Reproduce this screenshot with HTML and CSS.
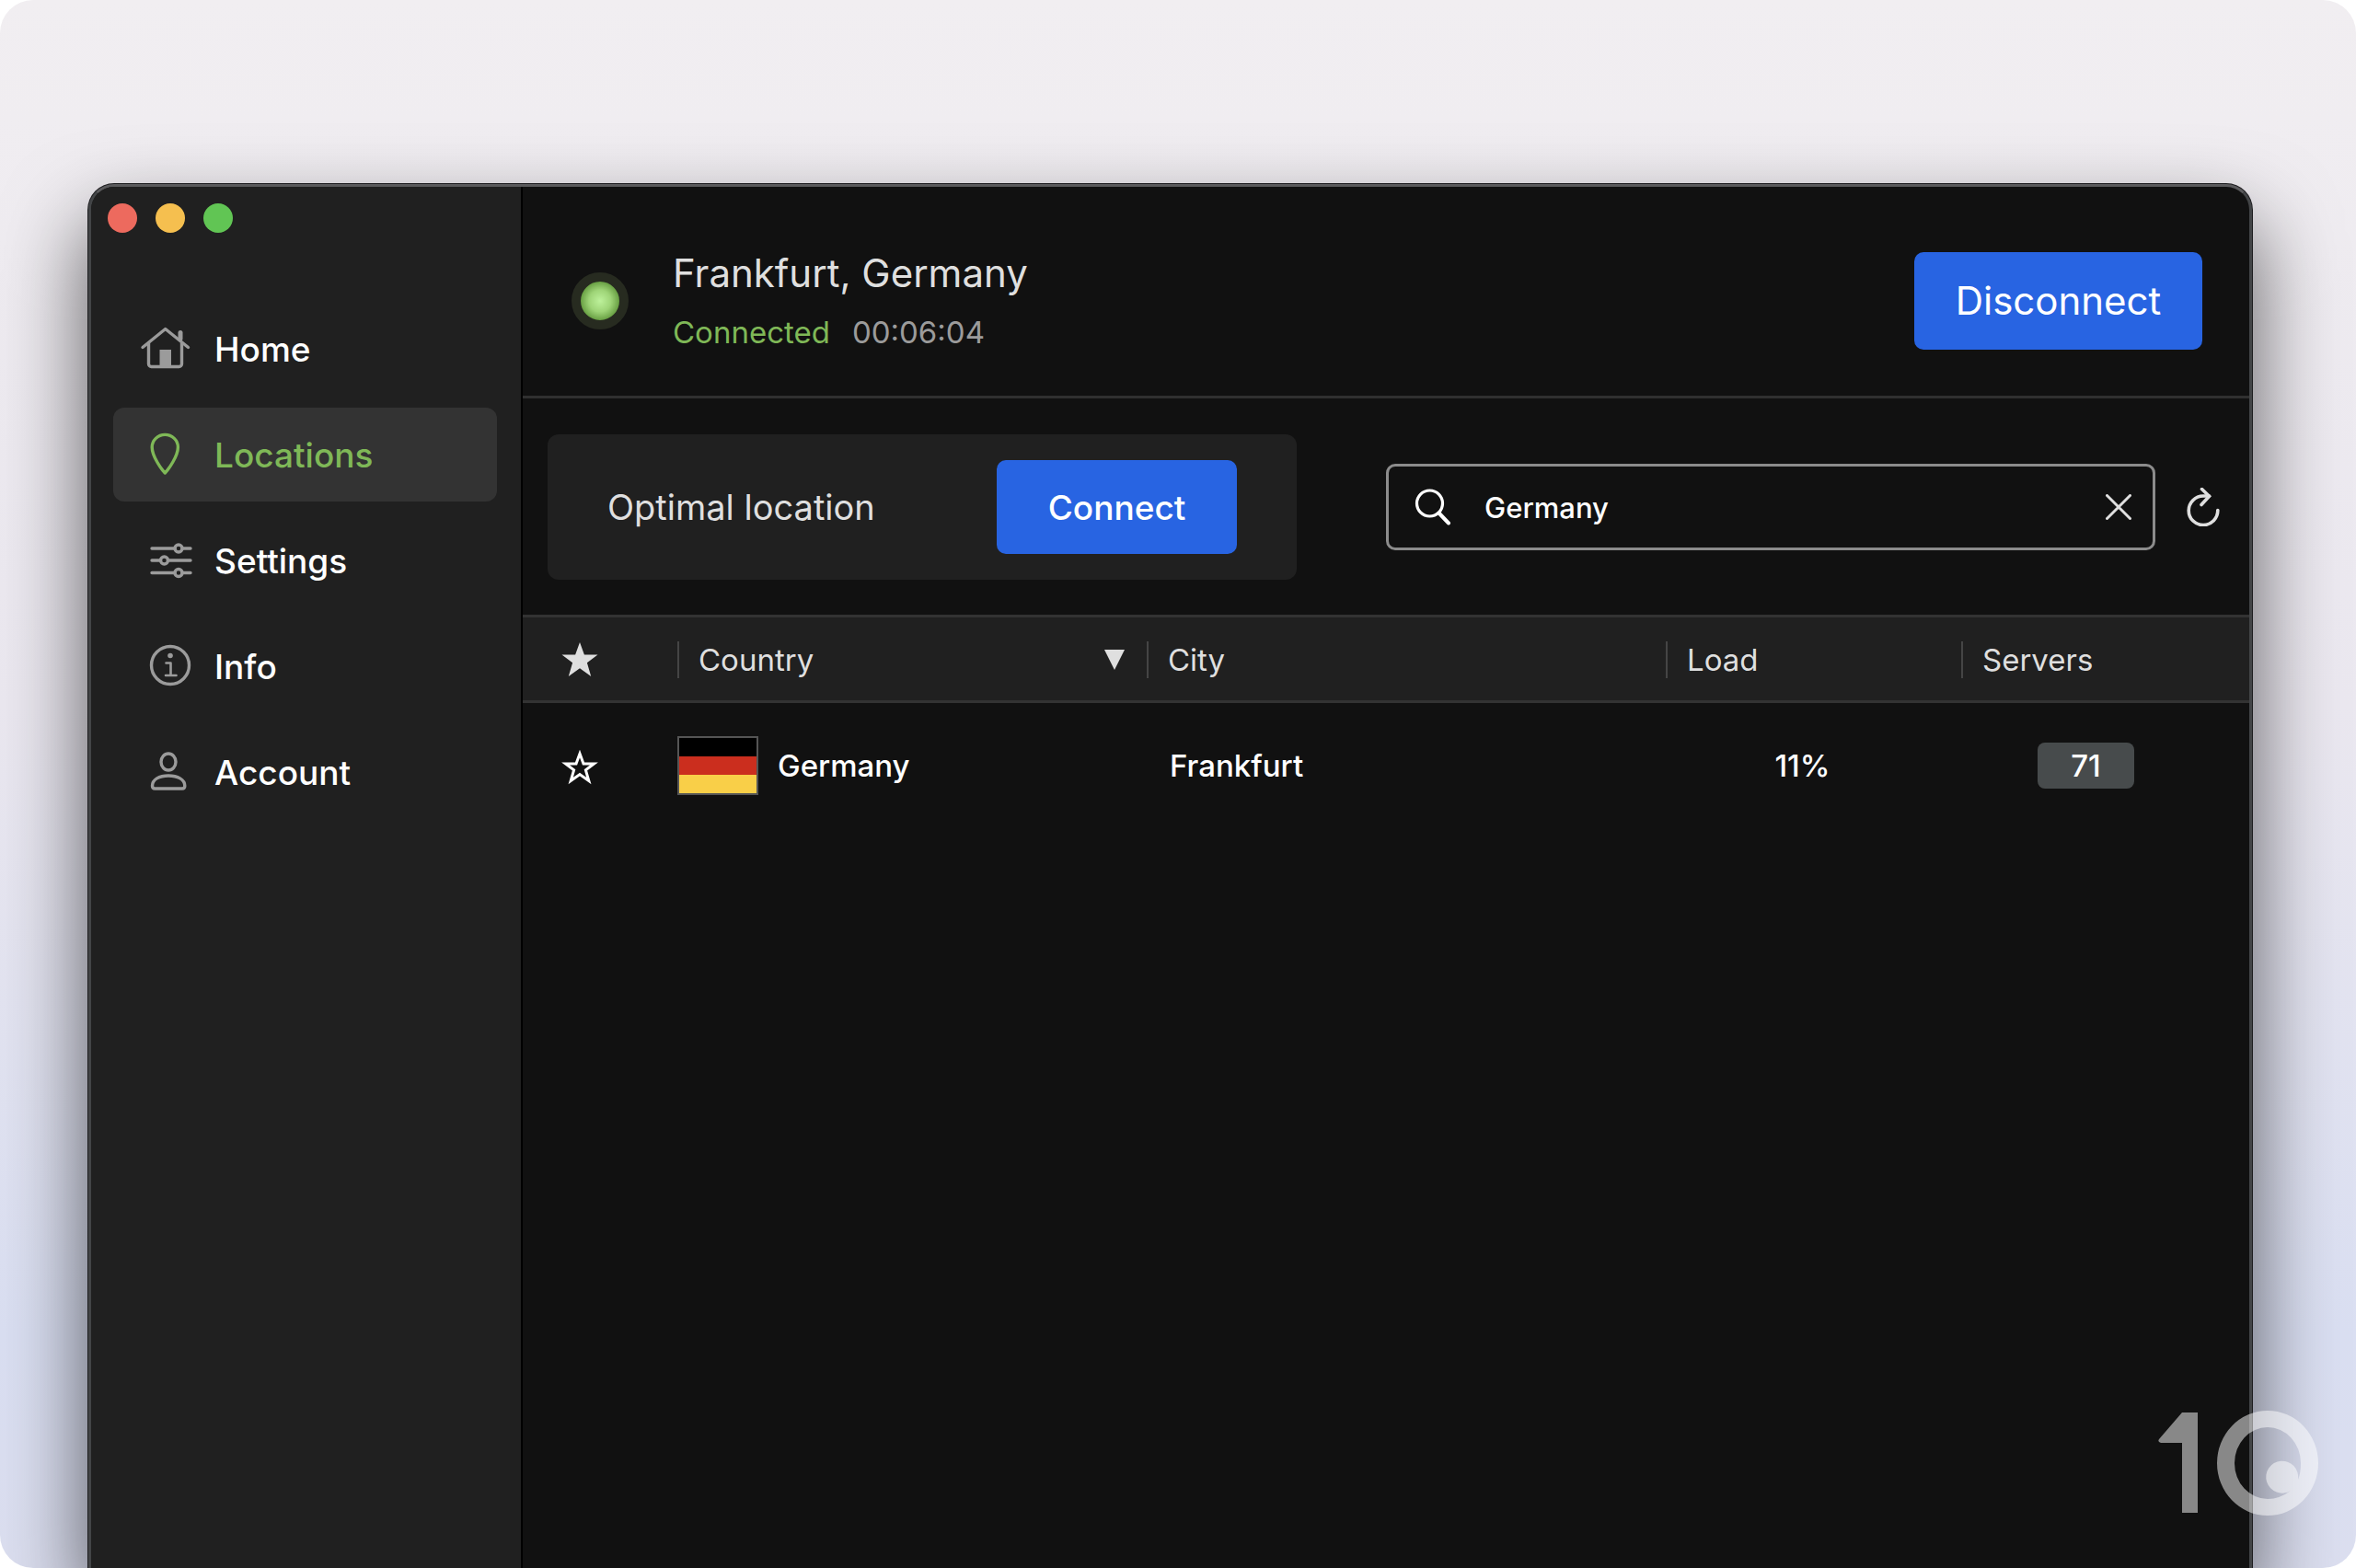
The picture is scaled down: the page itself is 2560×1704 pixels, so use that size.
FILE: index.html
```html
<!DOCTYPE html>
<html lang="en">
<head>
<meta charset="utf-8">
<title>VPN Locations</title>
<link rel="stylesheet" href="styles.css">
</head>
<body>
<div class="desktop">
  <div class="window">
    <aside class="sidebar">
      <div class="lights">
        <button class="light red" type="button" aria-label="Close"></button>
        <button class="light yellow" type="button" aria-label="Minimize"></button>
        <button class="light green" type="button" aria-label="Zoom"></button>
      </div>
      <nav class="nav">
        <a class="nav-item" href="#home">
          <svg class="nav-icon" viewBox="0 0 60 60" aria-hidden="true">
            <path d="M5 28.500 L29.700 8.500 L54.500 28.500"/><path d="M11.500 24V46.500a3 3 0 0 0 3 3H44.500a3 3 0 0 0 3-3V24"/><path class="solid" d="M23.500 31H36V50H23.500z"/><path d="M46 19V12.500" stroke-width="5"/>
          </svg>
          Home
        </a>
        <a class="nav-item active" href="#locations" aria-current="page">
          <svg class="nav-icon" viewBox="0 0 60 60" aria-hidden="true">
            <path d="M29.300 50C25.500 46 15.200 32 15.200 22A14.100 13.600 0 0 1 43.400 22C43.400 32 33 46 29.300 50z"/>
          </svg>
          Locations
        </a>
        <a class="nav-item" href="#settings">
          <svg class="nav-icon" viewBox="0 0 60 60" aria-hidden="true">
            <path d="M15 17H40M48 17H57M15 30H24.500M32.500 30H57M15 43.500H40M48 43.500H57"/>
            <circle cx="44" cy="17" r="4"/><circle cx="28.500" cy="30" r="4"/><circle cx="44" cy="43.500" r="4"/>
          </svg>
          Settings
        </a>
        <a class="nav-item" href="#info">
          <svg class="nav-icon" viewBox="0 0 60 60" aria-hidden="true">
            <circle cx="35" cy="29" r="20.500"/><circle class="solid" cx="35" cy="18.500" r="2.800"/><path d="M30.500 26.500H35.500V40M30 40H41.500" stroke-width="2.600"/>
          </svg>
          Info
        </a>
        <a class="nav-item" href="#account">
          <svg class="nav-icon" viewBox="0 0 60 60" aria-hidden="true">
            <ellipse cx="33" cy="19" rx="8" ry="9"/><path d="M15.500 45C15.500 38 23 34 33 34S50.800 38 50.800 45Q50.800 48 48 48H18.300Q15.500 48 15.500 45z"/>
          </svg>
          Account
        </a>
      </nav>
    </aside>
    <main class="main">
      <header class="status">
        <span class="status-dot"></span>
        <div class="status-text">
          <h1 class="status-title">Frankfurt, Germany</h1>
          <p class="status-line"><span class="connected">Connected</span><span class="timer">00:06:04</span></p>
        </div>
        <button class="button button-large" type="button">Disconnect</button>
      </header>
      <section class="toolbar">
        <div class="optimal">
          <span class="optimal-label">Optimal location</span>
          <button class="button" type="button">Connect</button>
        </div>
        <div class="search-group">
          <label class="search">
            <svg class="search-icon" viewBox="0 0 40 40" aria-hidden="true"><circle cx="16.500" cy="16" r="14"/><path d="M26.500 26.500L37 37.500" stroke-width="4"/></svg>
            <input class="search-input" type="text" value="Germany" aria-label="Search locations">
            <button class="icon-button" type="button" aria-label="Clear search">
              <svg class="clear-icon" viewBox="0 0 28 28" aria-hidden="true"><path d="M1.500 1.500L26.500 26.500M26.500 1.500L1.500 26.500"/></svg>
            </button>
          </label>
          <button class="icon-button" type="button" aria-label="Refresh">
            <svg class="refresh-icon" viewBox="0 0 36 42" aria-hidden="true"><path d="M24.500 9H18A15.800 15.800 0 1 0 33.800 24.500"/><path class="refresh-head" d="M16.500 1.500L24.500 9.300L16 18.500"/></svg>
          </button>
        </div>
      </section>
      <table class="locations">
        <colgroup><col class="col-star"><col class="col-country"><col><col class="col-load"><col class="col-servers"></colgroup>
        <thead>
          <tr>
            <th class="star-cell" aria-label="Favorite"><svg class="star star-full" viewBox="0 0 40 38" aria-hidden="true"><path d="M20 0L24.900 13.400H39.500L27.900 22.300L32.200 37L20 28.300L7.800 37L12.100 22.300L.5 13.400H15.100z"/></svg></th>
            <th><div class="head">Country<svg class="sort" viewBox="0 0 22 22" aria-hidden="true"><path d="M0 0H22L11 22z"/></svg></div></th>
            <th><div class="head">City</div></th>
            <th><div class="head">Load</div></th>
            <th><div class="head">Servers</div></th>
          </tr>
        </thead>
        <tbody>
          <tr>
            <td class="star-cell"><button class="icon-button" type="button" aria-label="Add to favorites"><svg class="star star-line" viewBox="0 0 40 38" aria-hidden="true"><path d="M20 4L24 14.900H35.500L26.400 21.900L29.800 33.500L20 26.500L10.200 33.500L13.600 21.900L4.500 14.900H16z"/></svg></button></td>
            <td><div class="country"><span class="flag"></span>Germany</div></td>
            <td class="city">Frankfurt</td>
            <td class="load">11%</td>
            <td class="servers"><span class="badge">71</span></td>
          </tr>
        </tbody>
      </table>
    </main>
  </div>
  <svg class="watermark" viewBox="0 0 176 116" role="img" aria-label="10">
    <path d="M26 2H43V111H26V35H3Q-1 34 1 31z"/>
    <path fill-rule="evenodd" d="M119 0A55 57 0 1 1 119 114A55 57 0 1 1 119 0zM119 18A36 39 0 1 0 119 96Q132 96 144 87A17.500 17.500 0 1 1 152 75Q155 68 155 57A36 39 0 0 0 119 18z"/>
  </svg>
</div>
</body>
</html>
```
FILE: styles.css
```css
* {
  box-sizing: border-box;
}

body {
  margin: 0;
  background: #ffffff;
  color: #ffffff;
  font-family: Inter, "Liberation Sans", sans-serif;
}

button {
  border: 0;
  padding: 0;
  background: none;
  color: inherit;
  font: inherit;
  cursor: pointer;
}

.desktop {
  position: relative;
  display: flex;
  min-height: 100vh;
  padding: 200px 113px 0 96px;
  overflow: hidden;
  border-radius: 36px;
  background: linear-gradient(#f1eef1, #ebe8f0 45%, #dadff2 85%, #dcdff0);
}

.window {
  display: flex;
  flex: 1;
  overflow: hidden;
  border: 3px solid #434547;
  border-top-color: #5a5a5c;
  border-bottom: 0;
  border-radius: 28px 28px 0 0;
  background: #111111;
  box-shadow: 0 0 0 1px #1e1e20, 0 44px 88px 4px rgba(0, 0, 0, 0.58);
}

.sidebar {
  flex: none;
  width: 469px;
  padding: 18px 26px 0 24px;
  border-right: 2px solid #000000;
  background: #202020;
}

.lights {
  display: flex;
  gap: 20px;
  margin-left: -6px;
}

.light {
  width: 32px;
  height: 32px;
  border-radius: 50%;
}

.red { background: #ed6a5e; }
.yellow { background: #f5bf4f; }
.green { background: #61c554; }

.nav {
  display: flex;
  flex-direction: column;
  gap: 13px;
  margin-top: 75px;
}

.nav-item {
  display: flex;
  align-items: center;
  gap: 23px;
  height: 102px;
  padding-left: 27px;
  border-radius: 12px;
  color: #ffffff;
  font-size: 37px;
  font-weight: 500;
  text-decoration: none;
}

.nav-item.active {
  background: #333333;
  color: #7fb857;
}

.nav-icon {
  width: 60px;
  height: 60px;
  fill: none;
  stroke: #9b9b9b;
  stroke-width: 3.4;
  stroke-linejoin: round;
  stroke-linecap: round;
}

.nav-icon .solid {
  fill: #9b9b9b;
  stroke: none;
}

.active .nav-icon {
  stroke: #7fb857;
}

.main {
  flex: 1;
  min-width: 0;
}

.status {
  display: flex;
  align-items: center;
  height: 230px;
  padding: 20px 51px 0 53px;
  border-bottom: 3px solid #303030;
}

.status-dot {
  width: 62px;
  height: 62px;
  margin-right: 48px;
  border: 10px solid #272b20;
  border-radius: 50%;
  background: radial-gradient(circle, #bdf19b 0, #9ed477 40%, #69a044 70%);
}

.status-text {
  flex: 1;
}

.status-title {
  margin: 0;
  color: #dfdfdf;
  font-size: 42px;
  font-weight: 400;
  line-height: 60px;
}

.status-line {
  display: flex;
  gap: 24px;
  margin: 8px 0 0;
  color: #9b9b9b;
  font-size: 33px;
  line-height: 52px;
}

.connected {
  color: #7fb857;
}

.button {
  width: 261px;
  height: 102px;
  border-radius: 10px;
  background: #2864e2;
  color: #ffffff;
  font-size: 37px;
  font-weight: 500;
}

.button-large {
  width: 313px;
  height: 106px;
  font-size: 42px;
  font-weight: 400;
}

.toolbar {
  display: flex;
  align-items: center;
  justify-content: space-between;
  padding: 39px 32px 38px 27px;
}

.optimal {
  display: flex;
  align-items: center;
  justify-content: space-between;
  width: 814px;
  height: 158px;
  padding: 0 65px;
  border-radius: 12px;
  background: #202020;
}

.optimal-label {
  color: #dfdfdf;
  font-size: 38px;
}

.search-group {
  display: flex;
  align-items: center;
  gap: 34px;
}

.search {
  display: flex;
  align-items: center;
  width: 836px;
  height: 94px;
  padding: 0 23px 0 28px;
  border: 3px solid #8c8c8c;
  border-radius: 10px;
}

.search-icon {
  width: 40px;
  height: 40px;
  fill: none;
  stroke: #ffffff;
  stroke-width: 3.2;
  stroke-linecap: round;
}

.search-input {
  flex: 1;
  min-width: 0;
  margin-left: 36px;
  padding: 0;
  border: 0;
  outline: 0;
  background: none;
  color: #ffffff;
  font: 500 31px Inter, "Liberation Sans", sans-serif;
}

.icon-button {
  display: inline-flex;
  vertical-align: middle;
}

.clear-icon,
.refresh-icon {
  fill: none;
  stroke: #dfdfdf;
  stroke-width: 3;
  stroke-linecap: round;
}

.clear-icon {
  width: 28px;
  height: 28px;
}

.refresh-icon {
  width: 36px;
  height: 42px;
  stroke-width: 3.6;
}

.locations {
  width: 100%;
  border-collapse: separate;
  border-spacing: 0;
  table-layout: fixed;
  font-size: 33px;
}

.col-star { width: 168px; }
.col-country { width: 510px; }
.col-load { width: 321px; }
.col-servers { width: 313px; }

.locations th {
  height: 96px;
  padding: 2px 0 0;
  border-top: 3px solid #333333;
  border-bottom: 3px solid #333333;
  background: #202020;
  color: #dfdfdf;
  font-weight: 400;
  text-align: left;
}

.locations td {
  height: 134px;
  padding: 2px 0 0;
  font-weight: 500;
}

.locations .star-cell {
  padding-left: 42px;
}

.star {
  display: block;
  width: 40px;
  height: 38px;
}

.star-full {
  fill: #dfdfdf;
}

.star-line {
  fill: none;
  stroke: #ffffff;
  stroke-width: 3;
  stroke-linejoin: miter;
}

.head {
  display: flex;
  align-items: center;
  justify-content: space-between;
  height: 40px;
  padding: 0 24px 0 21px;
  border-left: 2px solid #454545;
}

.sort {
  width: 22px;
  height: 22px;
  fill: #dfdfdf;
}

.country {
  display: flex;
  align-items: center;
  gap: 21px;
}

.flag {
  width: 88px;
  height: 64px;
  border: 2px solid #555555;
  background: linear-gradient(#000000 33%, #cb2e1e 33% 66%, #f9cf48 66%);
}

.locations .city {
  padding-left: 25px;
}

.locations .load {
  padding-right: 24px;
  text-align: center;
}

.locations .servers {
  padding-right: 42px;
  text-align: center;
}

.badge {
  display: inline-block;
  width: 105px;
  border-radius: 8px;
  background: #474b4c;
  line-height: 50px;
}

.watermark {
  position: absolute;
  right: 39px;
  bottom: 55px;
  width: 176px;
  height: 116px;
  fill: rgba(255, 255, 255, 0.5);
}
```
